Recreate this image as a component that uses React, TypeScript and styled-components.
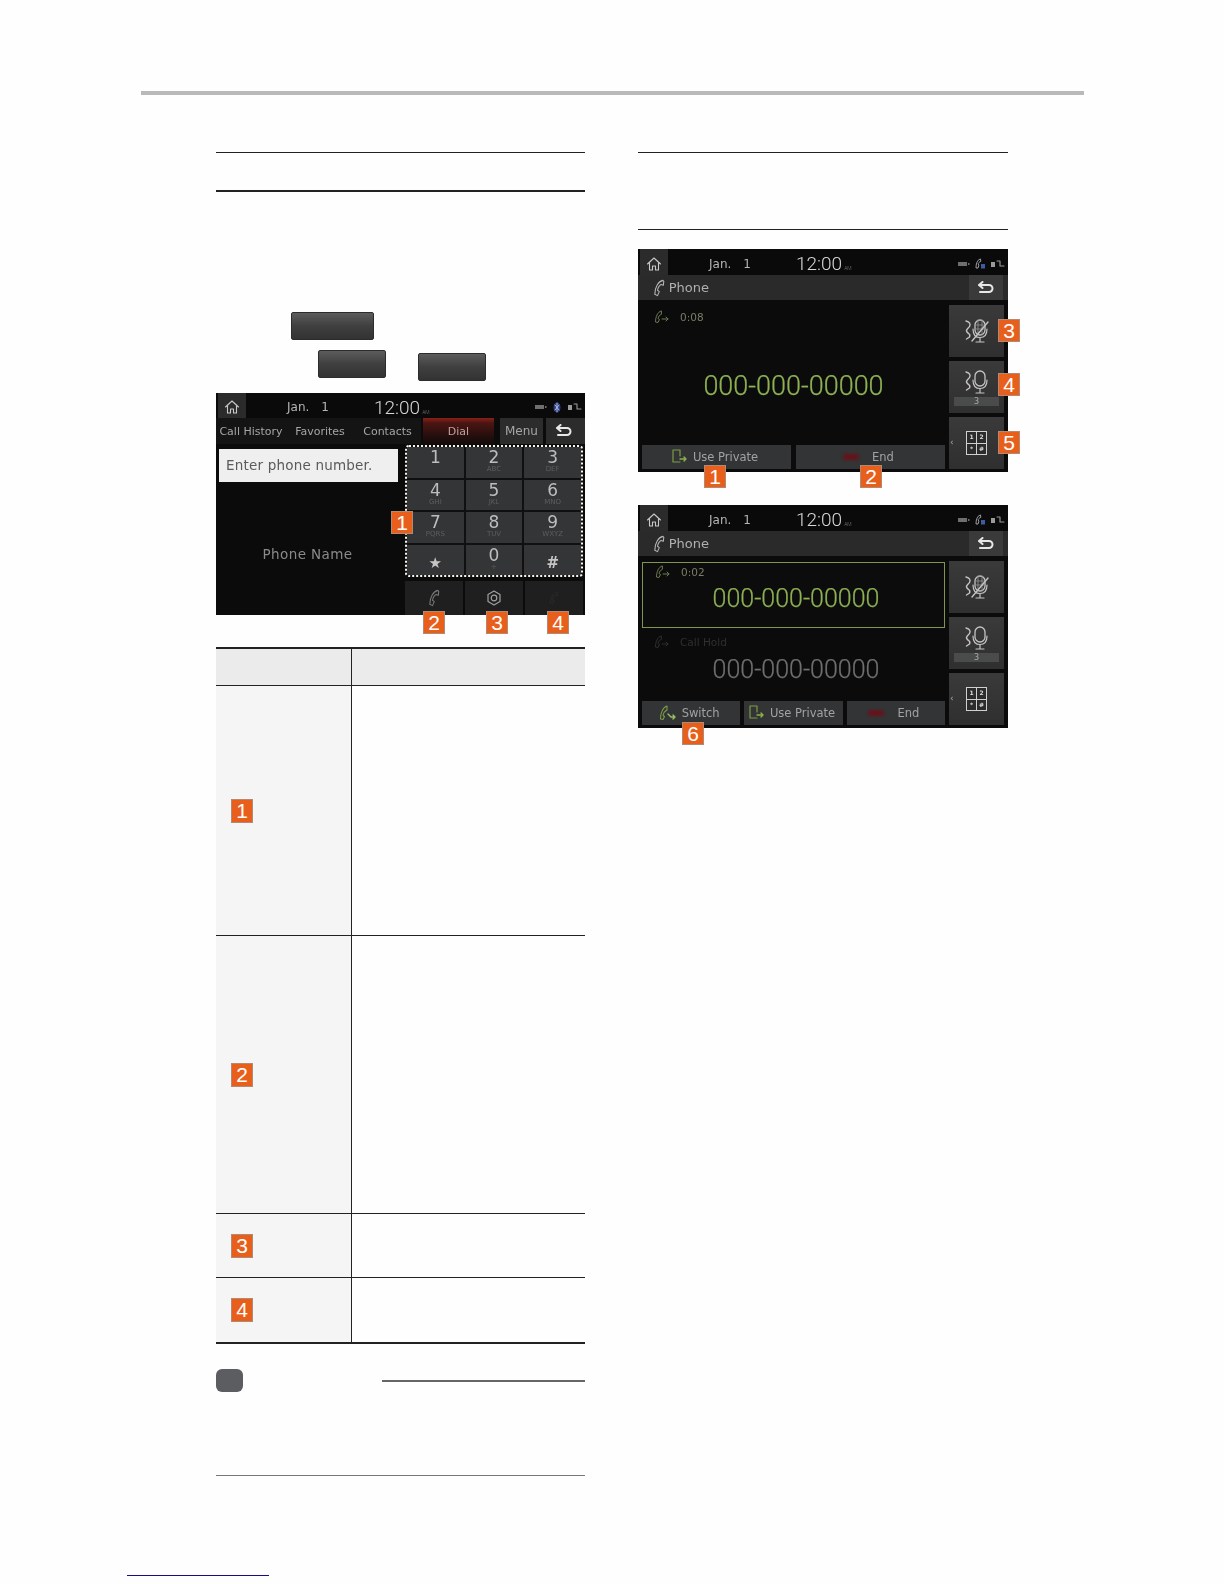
import React from "react";
import styled, { createGlobalStyle } from "styled-components";

const Global = createGlobalStyle`
  html, body { margin: 0; padding: 0; background: #fefefe; }
  body { font-family: "DejaVu Sans", sans-serif; }
`;

const Page = styled.div`
  width: 1224px;
  height: 1584px;
  position: relative;
  overflow: hidden;
  padding-top: 91px;
  box-sizing: border-box;
`;
const TopBar = styled.div`
  height: 4px;
  width: 943px;
  margin-left: 141px;
  background: #b9b9b9;
`;
const Columns = styled.div`
  display: flex;
  gap: 53px;
  margin: 57px 0 0 216px;
`;
const Column = styled.div`
  width: 369px;
  display: flex;
  flex-direction: column;
`;
const RightColumn = styled(Column)`
  width: 370px;
`;
const Heading = styled.div<{ $h: number }>`
  height: ${(p) => p.$h}px;
  box-sizing: border-box;
  border-top: 1px solid #222;
  border-bottom: ${(p) => (p.$h < 50 ? 2 : 1)}px solid #222;
`;
const ButtonRow = styled.div<{ $top: number; $left: number }>`
  display: flex;
  gap: 32px;
  margin-top: ${(p) => p.$top}px;
  margin-left: ${(p) => p.$left}px;
`;
const KeyCap = styled.div<{ $w: number; $shift?: number }>`
  width: ${(p) => p.$w}px;
  height: 28px;
  margin-top: ${(p) => p.$shift ?? 0}px;
  box-sizing: border-box;
  border-radius: 2px;
  border: 1px solid #2c2c2c;
  background: linear-gradient(#5c5c5c, #3f3f3f 50%, #333);
`;

const Frame = styled.div<{ $top: number }>`
  position: relative;
  margin-top: ${(p) => p.$top}px;
`;
const Screen = styled.div<{ $h: number }>`
  height: ${(p) => p.$h}px;
  background: #0b0b0b;
  display: flex;
  flex-direction: column;
  overflow: hidden;
  filter: blur(0.45px);
  color: #aaa;
`;
const StatusBar = styled.div<{ $h: number }>`
  height: ${(p) => p.$h}px;
  box-sizing: border-box;
  padding-top: 3px;
  flex: none;
  display: flex;
  align-items: center;
  background: #0a0a0a;
`;
const HomeBtn = styled.div`
  width: 28px;
  align-self: stretch;
  margin: -3px 0 0 2px;
  padding-top: 3px;
  background: #2b2b2b;
  display: flex;
  align-items: center;
  justify-content: center;
`;
const DateText = styled.div`
  margin-left: 41px;
  width: 88px;
  display: flex;
  gap: 12px;
  font-size: 12px;
  color: #b5b5b5;
`;
const Clock = styled.div`
  font-family: Roboto, sans-serif;
  font-weight: 300;
  font-size: 19px;
  color: #d8d8d8;
  display: flex;
  align-items: baseline;
  gap: 2px;
  margin-left: -1px;
`;
const Meridiem = styled.span`
  font-size: 5px;
  color: #777;
`;
const StatusIcons = styled.div`
  margin-left: auto;
  margin-right: 3px;
  display: flex;
  align-items: center;
  gap: 5px;
`;
const Tabs = styled.div`
  height: 26px;
  flex: none;
  display: flex;
  align-items: stretch;
`;
const TabLabel = styled.div<{ $w: number }>`
  width: ${(p) => p.$w}px;
  font-size: 11px;
  color: #a5a5a5;
  display: flex;
  align-items: center;
  justify-content: center;
  white-space: nowrap;
  background: #141414;
`;
const DialTab = styled(TabLabel)`
  margin-left: 2px;
  color: #c0a0a0;
  background: linear-gradient(#8a2018 0, #4a1512 20%, #1d0d0c 80%, #140a0a);
`;
const MenuTab = styled(TabLabel)`
  margin-left: 6px;
  font-size: 12px;
  background: #2c2c2c;
`;
const BackTab = styled.div<{ $w: number }>`
  width: ${(p) => p.$w}px;
  margin-left: 3px;
  padding-right: 4px;
  box-sizing: border-box;
  background: #2c2c2c;
  display: flex;
  align-items: center;
  justify-content: center;
`;
const DialMain = styled.div`
  flex: 1;
  display: flex;
`;
const DialLeft = styled.div`
  width: 189px;
  flex: none;
  display: flex;
  flex-direction: column;
`;
const NumberInput = styled.div`
  margin: 5px 0 0 3px;
  width: 179px;
  height: 33px;
  box-sizing: border-box;
  padding: 0 0 2px 7px;
  display: flex;
  align-items: center;
  background: #efefef;
  color: #5a5a5a;
  font-size: 13.5px;
  letter-spacing: 0.2px;
  white-space: nowrap;
`;
const PhoneName = styled.div`
  margin-top: 64px;
  padding-right: 6px;
  text-align: center;
  font-size: 13.5px;
  letter-spacing: 0.4px;
  color: #8a8a8a;
`;
const DialRight = styled.div`
  width: 178px;
  display: flex;
  flex-direction: column;
  padding-top: 1px;
`;
const Keypad = styled.div`
  height: 132px;
  box-sizing: border-box;
  border: 2px dotted #fbf4ea;
  border-radius: 4px;
  display: grid;
  grid-template-columns: repeat(3, 1fr);
  grid-template-rows: repeat(4, 1fr);
  gap: 2px;
  background: #101010;
  overflow: hidden;
`;
const Key = styled.div`
  background: #343536;
  display: flex;
  flex-direction: column;
  align-items: center;
  padding-top: 2px;
  line-height: 1;
`;
const KeyDigit = styled.div`
  font-size: 17px;
  color: #bdbdbd;
`;
const KeySub = styled.div`
  font-size: 7px;
  height: 7px;
  color: #5e5e5e;
`;
const KeySymbol = styled.div`
  margin-top: 9px;
  font-size: 15px;
  font-weight: bold;
  color: #c5c5c5;
`;
const ActionRow = styled.div`
  margin-top: 4px;
  flex: 1;
  display: grid;
  grid-template-columns: repeat(3, 1fr);
  gap: 2px;
`;
const ActionKey = styled.div`
  background: #1f1f1f;
  display: flex;
  align-items: center;
  justify-content: center;
`;

const TitleBar = styled.div`
  height: 25px;
  flex: none;
  display: flex;
  align-items: center;
  background: #2a2a2a;
  padding-left: 15px;
  gap: 4px;
  font-size: 13px;
  color: #b0b0b0;
`;
const TitleBack = styled.div`
  margin-left: auto;
  margin-right: 5px;
  width: 34px;
  height: 25px;
  background: #3a3a3a;
  display: flex;
  align-items: center;
  justify-content: center;
`;
const CallBody = styled.div`
  flex: 1;
  display: flex;
  gap: 4px;
  padding: 5px 4px 3px 4px;
  min-height: 0;
`;
const CallMain = styled.div`
  flex: 1;
  display: flex;
  flex-direction: column;
  min-width: 0;
`;
const Timer = styled.div`
  display: flex;
  align-items: center;
  gap: 10px;
  padding: 5px 0 0 12px;
  font-size: 10.5px;
  color: #7c7c66;
`;
const CenterNumber = styled.div<{ $size: number; $color: string }>`
  font-family: Roboto, sans-serif;
  font-weight: 300;
  -webkit-text-stroke: 0.25px ${(p) => p.$color};
  font-size: ${(p) => p.$size}px;
  line-height: 1;
  text-align: center;
  color: ${(p) => p.$color};
  white-space: nowrap;
`;
const SingleCall = styled.div`
  flex: 1;
  display: flex;
  flex-direction: column;
`;
const SingleNumber = styled(CenterNumber)`
  margin-top: 49px;
`;
const ActiveCall = styled.div`
  height: 66px;
  margin-top: 1px;
  flex: none;
  box-sizing: border-box;
  border: 1.5px solid #7d9650;
  background: #0c0c0c;
`;
const ActiveTimer = styled(Timer)`
  padding-top: 2px;
`;
const ActiveNumber = styled(CenterNumber)`
  margin-top: 7px;
  padding-left: 5px;
`;
const HeldCall = styled.div`
  flex: 1;
`;
const HeldTimer = styled(Timer)`
  padding-top: 7px;
  color: #2f2f2f;
`;
const HeldNumber = styled(CenterNumber)`
  margin-top: 8px;
  padding-left: 5px;
`;
const CallActions = styled.div<{ $gap: number }>`
  height: 24px;
  flex: none;
  display: flex;
  gap: ${(p) => p.$gap}px;
`;
const CallAction = styled.div`
  flex: 1;
  background: #333435;
  display: flex;
  align-items: center;
  justify-content: center;
  gap: 5px;
  padding: 0 4px 1px 0;
  font-size: 11.5px;
  color: #a2a2a2;
  white-space: nowrap;
`;
const RedGlow = styled.span`
  width: 16px;
  height: 6px;
  margin-right: 8px;
  border-radius: 3px;
  background: #66131a;
  filter: blur(1.5px);
`;
const SideColumn = styled.div`
  width: 55px;
  flex: none;
  display: flex;
  flex-direction: column;
  gap: 4px;
`;
const SideButton = styled.div`
  flex: 1;
  background: linear-gradient(#3a3a3a, #2f2f2f);
  display: flex;
  flex-direction: column;
  align-items: center;
  justify-content: center;
  position: relative;
`;
const LevelBar = styled.div`
  width: 45px;
  height: 9px;
  margin-top: 2px;
  background: #4a4c4c;
  font-size: 8px;
  line-height: 9px;
  text-align: center;
  color: #aaa;
`;
const Chevron = styled.span`
  position: absolute;
  left: 1px;
  top: 50%;
  margin-top: -6px;
  font-size: 9px;
  color: #aaa;
`;
const PadGrid = styled.div`
  width: 21px;
  height: 24px;
  padding: 1px;
  box-sizing: border-box;
  display: grid;
  grid-template-columns: 1fr 1fr;
  grid-template-rows: 1fr 1fr;
  gap: 1px;
  background: #d0d0d0;
`;
const PadCell = styled.div`
  background: #2c2c2c;
  color: #ddd;
  font-size: 6px;
  font-weight: bold;
  line-height: 10px;
  text-align: center;
`;

const Badge = styled.div<{ $x: number; $y: number }>`
  position: absolute;
  left: ${(p) => p.$x}px;
  top: ${(p) => p.$y}px;
  width: 22px;
  height: 23px;
  box-sizing: border-box;
  border: 1px solid #b08a74;
  background: #e85f1c;
  color: #fff;
  font-family: "Liberation Sans", sans-serif;
  font-size: 21px;
  line-height: 21px;
  text-align: center;
`;

const SpecTable = styled.div`
  margin-top: 32px;
  display: grid;
  grid-template-columns: 136px 1fr;
  grid-template-rows: 37px 250px 278px 64px 64px;
  border-top: 2px solid #222;
  border-bottom: 2px solid #222;
`;
const HeadCell = styled.div`
  background: #ebebeb;
  border-bottom: 1px solid #222;
`;
const HeadCellLeft = styled(HeadCell)`
  border-right: 1px solid #222;
`;
const LabelCell = styled.div<{ $last?: boolean }>`
  background: #f5f5f5;
  border-right: 1px solid #222;
  border-bottom: ${(p) => (p.$last ? "none" : "1px solid #222")};
  display: flex;
  align-items: center;
  padding-left: 15px;
`;
const BodyCell = styled.div<{ $last?: boolean }>`
  border-bottom: ${(p) => (p.$last ? "none" : "1px solid #222")};
`;
const TableBadge = styled.div`
  width: 22px;
  height: 24px;
  box-sizing: border-box;
  border: 1px solid #b08a74;
  background: #e85f1c;
  color: #fff;
  font-family: "Liberation Sans", sans-serif;
  font-size: 21px;
  line-height: 22px;
  text-align: center;
`;
const NoteHead = styled.div`
  margin-top: 25px;
  height: 23px;
  display: flex;
`;
const NoteChip = styled.div`
  width: 27px;
  height: 23px;
  border-radius: 6px;
  background: #5b5d60;
`;
const NoteRule = styled.div`
  margin: 11px 0 0 139px;
  flex: 1;
  height: 2px;
  background: #666;
`;
const NoteEnd = styled.div`
  margin-top: 83px;
  height: 1px;
  background: #777;
`;
const FootLink = styled.div`
  position: absolute;
  left: 127px;
  top: 1575px;
  width: 142px;
  height: 1px;
  background: #10108c;
`;

const Svg = ({ w, h, children }: { w: number; h: number; children: React.ReactNode }) => (
  <svg width={w} height={h} viewBox={`0 0 ${w} ${h}`} fill="none" strokeLinecap="round" strokeLinejoin="round">
    {children}
  </svg>
);
const HomeIcon = () => (
  <Svg w={16} h={16}>
    <path d="M1.5 8 8 2l6.500 6M3.500 7v7h3v-4h3v4h3V7" stroke="#c8c8c8" strokeWidth="1.100" />
  </Svg>
);
const BackIcon = () => (
  <Svg w={18} h={14}>
    <path d="M2 4h10a3.500 3.500 0 0 1 0 7H3M2 4l3.500-3M2 4l3.500 3" stroke="#e8e8e8" strokeWidth="2" />
  </Svg>
);
const Handset = ({ color = "#9a9a9a", h = 18 }: { color?: string; h?: number }) => (
  <svg width={h * 0.65} height={h} viewBox="0 0 13 20" fill="none" strokeLinecap="round" strokeLinejoin="round">
    <path d="M11 1.500C6 2.500 2 9 2 17l3 1.500 2-4.500-2-1.500C5.500 10 7 7 9 6l2.500 1 .5-4.500z" stroke={color} strokeWidth="1.200" />
  </svg>
);
const CallArrow = ({ color }: { color: string }) => (
  <Svg w={16} h={14}>
    <path d="M7 1C3.500 2 1.500 7 1.500 12l2.500.5 1.500-3-1.500-1C4.500 6.500 5.500 5 7 4.500z" stroke={color} strokeWidth="1" />
    <path d="M8 9h6M12 7l2 2-2 2" stroke={color} strokeWidth="1" />
  </Svg>
);
const PrivateIcon = () => (
  <Svg w={17} h={15}>
    <path d="M2 1h7v6M2 1v12h7" stroke="#7c9a48" strokeWidth="1.200" />
    <path d="M9 10h6M13 8l2 2-2 2" stroke="#8ab04a" strokeWidth="1.400" />
  </Svg>
);
const SwitchIcon = () => (
  <Svg w={18} h={16}>
    <path d="M8 1C4 2 1.500 8 1.500 14l2.500.5 1.500-3-1.500-1C4.500 8 6 6 8 5z" stroke="#7c9a48" strokeWidth="1.100" />
    <path d="M9 9l3 3h4M14 10l2 2-2 2" stroke="#9ac060" strokeWidth="1.400" />
  </Svg>
);
const GearIcon = () => (
  <Svg w={18} h={18}>
    <path d="M9 2l6 3.500v7L9 16l-6-3.500v-7z" stroke="#a0a0a0" strokeWidth="1.200" />
    <circle cx="9" cy="9" r="2.800" stroke="#a0a0a0" strokeWidth="1.200" />
  </Svg>
);
const MicIcon = ({ muted }: { muted?: boolean }) => (
  <Svg w={27} h={26}>
    <rect x="12" y="2" width="10" height="15" rx="5" stroke="#c4c4c4" strokeWidth="1.300" />
    {muted && <path d="M12 7h10M12 11h10M15 2v15M19 2v15" stroke="#8c8c8c" strokeWidth="0.900" />}
    <path d="M10 11c0 6 2.500 8.500 7 8.500s7-2.500 7-8.500M17 19.500v4M13 24h8" stroke="#c4c4c4" strokeWidth="1.200" />
    <path d="M3 3c3.500 1 5 3 3.500 5.500S2 11.500 4 14s4 2 2.500 5l-3 2" stroke="#c4c4c4" strokeWidth="1.400" />
    {muted && <path d="M9 23 25 4" stroke="#c4c4c4" strokeWidth="1.400" />}
  </Svg>
);
const BatteryGlyph = () => (
  <Svg w={12} h={6}>
    <rect x="0" y="1" width="9" height="4" fill="#6e6e6e" />
    <rect x="10" y="2" width="1.500" height="2" fill="#6e6e6e" />
  </Svg>
);
const BluePhoneGlyph = ({ blue }: { blue?: boolean }) => (
  <Svg w={11} h={11}>
    {blue ? (
      <>
        <ellipse cx="5" cy="5.500" rx="3.500" ry="5" fill="#2c3f86" />
        <path d="M5 1v9M3 3l4 5M3 8l4-5" stroke="#c8cfe8" strokeWidth="0.800" />
      </>
    ) : (
      <>
        <path d="M5 1C2 2 1 6 1 10h2l1-3-1-1c.5-1 1-2 2.500-2.500z" stroke="#aaa" strokeWidth="0.900" />
        <rect x="6" y="6" width="4" height="4.500" fill="#3f5aa0" />
      </>
    )}
  </Svg>
);
const SignalGlyph = () => (
  <Svg w={14} h={8}>
    <rect x="0" y="2" width="4" height="5" fill="#9a9a9a" />
    <path d="M6 1h3v5h4" stroke="#9a9a9a" strokeWidth="1.100" />
  </Svg>
);

const Status = ({ blue, h }: { blue?: boolean; h: number }) => (
  <StatusBar $h={h}>
    <HomeBtn>
      <HomeIcon />
    </HomeBtn>
    <DateText>
      <span>Jan.</span>
      <span>1</span>
    </DateText>
    <Clock>
      12:00<Meridiem>AM</Meridiem>
    </Clock>
    <StatusIcons>
      <BatteryGlyph />
      <BluePhoneGlyph blue={blue} />
      <SignalGlyph />
    </StatusIcons>
  </StatusBar>
);

const keys: [string, string][] = [
  ["1", ""],
  ["2", "ABC"],
  ["3", "DEF"],
  ["4", "GHI"],
  ["5", "JKL"],
  ["6", "MNO"],
  ["7", "PQRS"],
  ["8", "TUV"],
  ["9", "WXYZ"],
];

const Side = () => (
  <SideColumn>
    <SideButton>
      <MicIcon muted />
    </SideButton>
    <SideButton>
      <MicIcon />
      <LevelBar>3</LevelBar>
    </SideButton>
    <SideButton>
      <Chevron>‹</Chevron>
      <PadGrid>
        <PadCell>1</PadCell>
        <PadCell>2</PadCell>
        <PadCell>*</PadCell>
        <PadCell>#</PadCell>
      </PadGrid>
    </SideButton>
  </SideColumn>
);

const Title = () => (
  <TitleBar>
    <Handset color="#b5b5b5" />
    Phone
    <TitleBack>
      <BackIcon />
    </TitleBack>
  </TitleBar>
);

const GREEN = "#8db153";

export default function App() {
  return (
    <Page>
      <Global />
      <TopBar />
      <Columns>
        <Column>
          <Heading $h={40} />
          <ButtonRow $top={120} $left={75}>
            <KeyCap $w={83} />
          </ButtonRow>
          <ButtonRow $top={10} $left={102}>
            <KeyCap $w={68} />
            <KeyCap $w={68} $shift={3} />
          </ButtonRow>
          <Frame $top={12}>
            <Screen $h={222}>
              <Status blue h={25} />
              <Tabs>
                <TabLabel $w={70}>Call History</TabLabel>
                <TabLabel $w={68}>Favorites</TabLabel>
                <TabLabel $w={67}>Contacts</TabLabel>
                <DialTab $w={71}>Dial</DialTab>
                <MenuTab $w={43}>Menu</MenuTab>
                <BackTab $w={39}>
                  <BackIcon />
                </BackTab>
              </Tabs>
              <DialMain>
                <DialLeft>
                  <NumberInput>Enter phone number.</NumberInput>
                  <PhoneName>Phone Name</PhoneName>
                </DialLeft>
                <DialRight>
                  <Keypad>
                    {keys.map(([d, s]) => (
                      <Key key={d}>
                        <KeyDigit>{d}</KeyDigit>
                        <KeySub>{s}</KeySub>
                      </Key>
                    ))}
                    <Key>
                      <KeySymbol>★</KeySymbol>
                    </Key>
                    <Key>
                      <KeyDigit>0</KeyDigit>
                      <KeySub>+</KeySub>
                    </Key>
                    <Key>
                      <KeySymbol>#</KeySymbol>
                    </Key>
                  </Keypad>
                  <ActionRow>
                    <ActionKey>
                      <Handset color="#777" />
                    </ActionKey>
                    <ActionKey>
                      <GearIcon />
                    </ActionKey>
                    <ActionKey>
                      <Handset color="#2c2c2c" h={14} />
                    </ActionKey>
                  </ActionRow>
                </DialRight>
              </DialMain>
            </Screen>
            <Badge $x={175} $y={118}>1</Badge>
            <Badge $x={207} $y={218}>2</Badge>
            <Badge $x={270} $y={218}>3</Badge>
            <Badge $x={331} $y={218}>4</Badge>
          </Frame>
          <SpecTable>
            <HeadCellLeft />
            <HeadCell />
            <LabelCell>
              <TableBadge>1</TableBadge>
            </LabelCell>
            <BodyCell />
            <LabelCell>
              <TableBadge>2</TableBadge>
            </LabelCell>
            <BodyCell />
            <LabelCell>
              <TableBadge>3</TableBadge>
            </LabelCell>
            <BodyCell />
            <LabelCell $last>
              <TableBadge>4</TableBadge>
            </LabelCell>
            <BodyCell $last />
          </SpecTable>
          <NoteHead>
            <NoteChip />
            <NoteRule />
          </NoteHead>
          <NoteEnd />
        </Column>
        <RightColumn>
          <Heading $h={78} />
          <Frame $top={19}>
            <Screen $h={223}>
              <Status h={26} />
              <Title />
              <CallBody>
                <CallMain>
                  <SingleCall>
                    <Timer>
                      <CallArrow color="#6d7a55" />
                      0:08
                    </Timer>
                    <SingleNumber $size={27} $color={GREEN}>
                      000-000-00000
                    </SingleNumber>
                  </SingleCall>
                  <CallActions $gap={5}>
                    <CallAction>
                      <PrivateIcon />
                      Use Private
                    </CallAction>
                    <CallAction>
                      <RedGlow />
                      End
                    </CallAction>
                  </CallActions>
                </CallMain>
                <Side />
              </CallBody>
            </Screen>
            <Badge $x={360} $y={70}>3</Badge>
            <Badge $x={360} $y={124}>4</Badge>
            <Badge $x={360} $y={182}>5</Badge>
            <Badge $x={66} $y={216}>1</Badge>
            <Badge $x={222} $y={216}>2</Badge>
          </Frame>
          <Frame $top={33}>
            <Screen $h={223}>
              <Status h={26} />
              <Title />
              <CallBody>
                <CallMain>
                  <ActiveCall>
                    <ActiveTimer>
                      <CallArrow color="#6d7a55" />
                      0:02
                    </ActiveTimer>
                    <ActiveNumber $size={25} $color={GREEN}>
                      000-000-00000
                    </ActiveNumber>
                  </ActiveCall>
                  <HeldCall>
                    <HeldTimer>
                      <CallArrow color="#2f2f2f" />
                      Call Hold
                    </HeldTimer>
                    <HeldNumber $size={25} $color="#6f6f6f">
                      000-000-00000
                    </HeldNumber>
                  </HeldCall>
                  <CallActions $gap={4}>
                    <CallAction>
                      <SwitchIcon />
                      Switch
                    </CallAction>
                    <CallAction>
                      <PrivateIcon />
                      Use Private
                    </CallAction>
                    <CallAction>
                      <RedGlow />
                      End
                    </CallAction>
                  </CallActions>
                </CallMain>
                <Side />
              </CallBody>
            </Screen>
            <Badge $x={44} $y={217}>6</Badge>
          </Frame>
        </RightColumn>
      </Columns>
      <FootLink />
    </Page>
  );
}
